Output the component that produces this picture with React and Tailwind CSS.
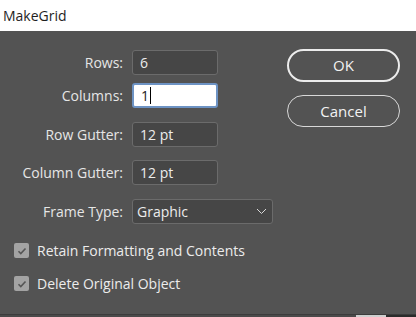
import React from 'react';

const font = { fontFamily: '"Open Sans", "Noto Sans", sans-serif' };

function Field({ label, value, top, active }) {
  return (
    <div className={`flex items-center ${top}`}>
      <div className="w-[123px] text-right text-[14px] text-[#e6e6e6]">{label}</div>
      <div
        className={`ml-[9px] w-[86px] h-[25px] rounded-[3px] flex items-center px-[7px] text-[14px] ${
          active
            ? 'bg-white border-2 border-[#6d93c4] text-[#222]'
            : 'bg-[#464646] border border-[#6b6b6b] text-[#ececec]'
        }`}
      >
        {value}
        {active && <span className="w-px h-[17px] bg-black ml-[1px]" />}
      </div>
    </div>
  );
}

function Check({ label, top }) {
  return (
    <div className={`flex items-center h-[15px] leading-none ${top}`}>
      <div className="w-[15px] h-[15px] rounded-[2px] bg-[#a3a3a3] flex items-center justify-center">
        <svg width="10" height="10" viewBox="0 0 10 10" fill="none">
          <path d="M1.5 5.2l2.3 2.3L8.5 2.5" stroke="#555" strokeWidth="1.6" />
        </svg>
      </div>
      <span className="ml-[8px] text-[14px] text-[#ececec]">{label}</span>
    </div>
  );
}

export default function App() {
  return (
    <div className="w-[416px] h-[317px] flex flex-col overflow-hidden" style={font}>
      <div className="h-[31px] bg-white flex items-center pl-[3px] text-[14px] text-[#1e1e1e]">MakeGrid</div>
      <div className="flex-1 bg-[#535353] flex flex-col">
        <div className="flex-1 flex">
          <div className="flex flex-col">
            <Field label="Rows:" value="6" top="mt-[19px]" />
            <Field label="Columns:" value="1" top="mt-[8px]" active />
            <Field label="Row Gutter:" value="12 pt" top="mt-[14px]" />
            <Field label="Column Gutter:" value="12 pt" top="mt-[13px]" />
            <div className="flex items-center mt-[14px]">
              <div className="w-[123px] text-right text-[14px] text-[#e6e6e6]">Frame Type:</div>
              <div className="ml-[9px] w-[141px] h-[25px] rounded-[3px] bg-[#464646] border border-[#6b6b6b] flex items-center justify-between pl-[4px] pr-[5px] text-[14px] text-[#ececec]">
                Graphic
                <svg width="11" height="7" viewBox="0 0 11 7" fill="none">
                  <path d="M1 1l4.5 4.5L10 1" stroke="#d8d8d8" strokeWidth="1" />
                </svg>
              </div>
            </div>
            <div className="pl-[14px]">
              <Check label="Retain Formatting and Contents" top="mt-[19px]" />
              <Check label="Delete Original Object" top="mt-[18px]" />
            </div>
          </div>
          <div className="ml-auto mr-[16px] flex flex-col">
            <button className="mt-[18px] w-[113px] h-[33px] rounded-full border-2 border-[#ececec] text-[15px] text-[#f2f2f2]">OK</button>
            <button className="mt-[13px] w-[113px] h-[32px] rounded-full border border-[#d8d8d8] text-[15px] text-[#f2f2f2]">Cancel</button>
          </div>
        </div>
        <div className="h-px bg-[#3c3c3c]" />
        <div className="h-[2px] flex">
          <div className="w-[356px] bg-[#4a4a4a]" />
          <div className="w-[30px] bg-[#cfcfcf]" />
          <div className="flex-1 bg-[#2b2b2b]" />
        </div>
      </div>
    </div>
  );
}
